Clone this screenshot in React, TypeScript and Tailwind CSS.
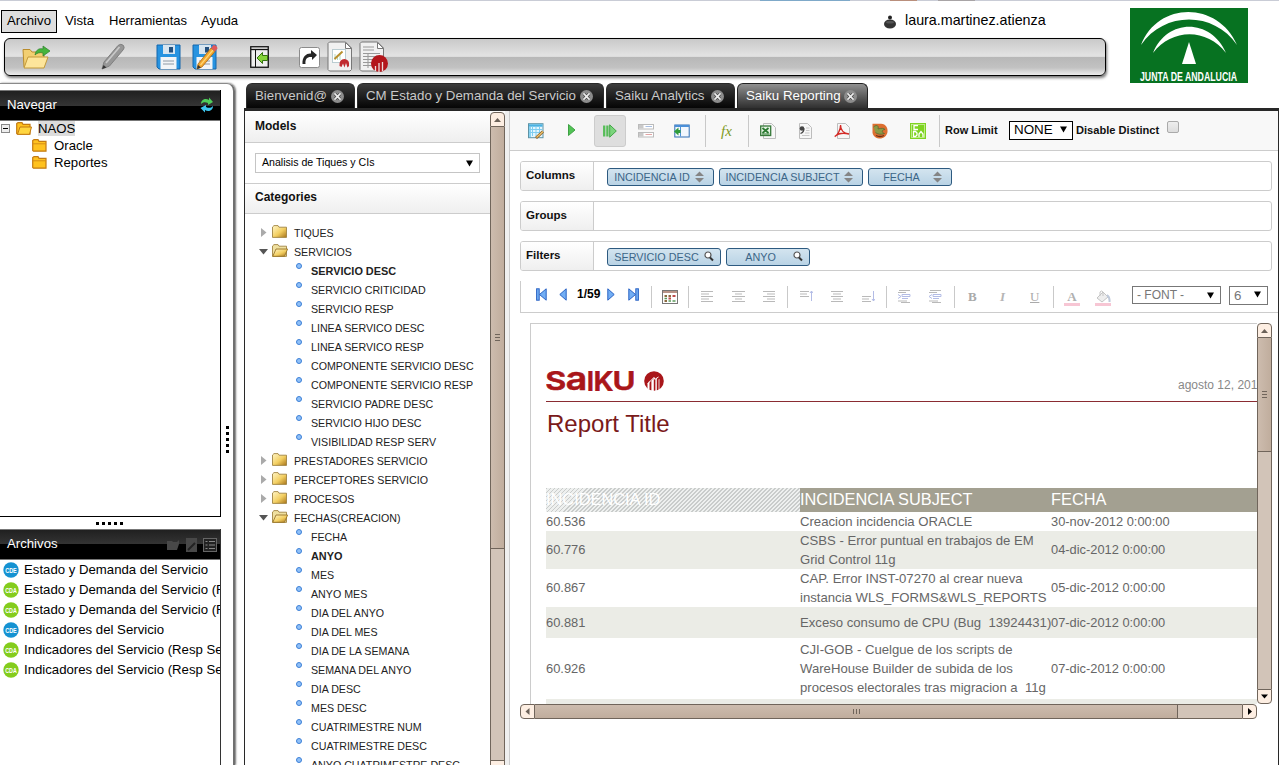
import React from "react";

type Kids = { children?: React.ReactNode };

/* ---------- logos ---------- */

function JuntaLogo() {
  return (
    <svg width="118" height="75" viewBox="0 0 118 75" className="block">
      <rect width="118" height="75" fill="#077221" />
      <path d="M11 37 C28 -7 88 -7 107 37 C84 3 34 3 11 37Z" fill="#fff" />
      <path d="M23 45 C37 10 81 10 96 45 C77 20 42 20 23 45Z" fill="#fff" />
      <path d="M59 34 L66 56 L52 56Z" fill="#fff" />
      <text x="10" y="73" fontSize="13" fontFamily="Liberation Sans, sans-serif" fontWeight="bold" fill="#fff" textLength="97" lengthAdjust="spacingAndGlyphs">
        JUNTA DE ANDALUCIA
      </text>
    </svg>
  );
}

function SaikuMark({ size }: { size: number }) {
  return (
    <svg width={size} height={size} viewBox="0 0 20 20" className="block">
      <circle cx="10" cy="10" r="9.8" fill="#a9161a" />
      <path d="M3.500 17.500 V13 L5.500 9.500 V19Z M7.400 20 V10 L9.800 6.800 V20Z M11.400 20 V8.400 L12.800 7 V20Z M14.600 20 V8.600 L15.400 8 V18Z" fill="#fff" />
      <path d="M3.500 13 L10 6.400 L10.800 8.400 L14.500 6" stroke="#fff" strokeWidth="1" fill="none" />
    </svg>
  );
}

function SaikuLogo() {
  return (
    <div className="flex h-5 items-center gap-[10px]">
      <svg
        width="88"
        height="20"
        viewBox="0 0 88 20"
        className="block"
        fontFamily="Inter, sans-serif"
        fontWeight="600"
        fill="#a9161a"
        stroke="#a9161a"
        strokeWidth=".6"
        strokeLinejoin="round"
      >
        <text x="-.8" y="19.300" fontSize="26" textLength="21" lengthAdjust="spacingAndGlyphs">S</text>
        <text x="19.800" y="19.300" fontSize="33" textLength="21.500" lengthAdjust="spacingAndGlyphs">a</text>
        <text x="40.800" y="19.600" fontSize="26.500">I</text>
        <text x="47.500" y="19.600" fontSize="26.500" textLength="20" lengthAdjust="spacingAndGlyphs">K</text>
        <text x="66.500" y="19.400" fontSize="26.500" textLength="23" lengthAdjust="spacingAndGlyphs">U</text>
      </svg>
      <SaikuMark size={20} />
    </div>
  );
}

/* ---------- main toolbar icons ---------- */

function OpenIcon() {
  return (
    <svg width="29" height="25" viewBox="0 0 29 25" className="block">
      <path d="M1 4.5 h7 l2 2.5 h12 v15 H2Z" fill="#f2cf72" stroke="#b98c2c" />
      <path d="M6 12 h20 l-4 11 H2Z" fill="#fde59b" stroke="#c39a3b" />
      <path d="M13 10 C14 4 18 3 21 4 V1 L28 6 L21 11 V8 C18 7 15 8 13 10Z" fill="#45b43c" stroke="#2d7f2b" strokeWidth=".7" />
    </svg>
  );
}

function PencilIcon() {
  return (
    <svg width="24" height="28" viewBox="0 0 24 28" className="block">
      <path d="M3 19 L17 2.5 Q20 0 22.5 2.5 Q24 5 22 7 L8.500 23 L1 26Z" fill="#979797" stroke="#808080" />
      <path d="M5 20 L18.500 4" stroke="#c9c9c9" strokeWidth="1.600" />
      <path d="M1 26 l1.600 -4 l2.800 2.400Z" fill="#333" />
    </svg>
  );
}

function SaveIcon({ edit }: { edit?: boolean }) {
  return (
    <svg width="26" height="26" viewBox="0 0 26 26" className="block">
      <path d="M1 1 H24 V25 H3 L1 23Z" fill="#2793e0" stroke="#1467ac" />
      <rect x="7" y="1" width="12" height="9" fill="#d7e5f0" />
      <rect x="13" y="3" width="4" height="5.500" fill="#23507e" />
      <rect x="4.500" y="13" width="16" height="12" fill="#f3f5f7" />
      <path d="M7 17 H18 M7 20 H18" stroke="#8e99a4" />
      {edit && (
        <g>
          <path d="M6 20 L19 4 L23 7.500 L10 23 L5 25Z" fill="#f3a72c" stroke="#a4681a" strokeWidth=".8" />
          <path d="M8.500 21 L21 6" stroke="#ffd777" strokeWidth="1.200" />
          <path d="M19 4 L21.500 1 Q25 1 25.500 4.500 L23 7.500Z" fill="#e05a5a" />
          <path d="M5 25 l1 -4 l3 2.600Z" fill="#333" />
        </g>
      )}
    </svg>
  );
}

function PanelIcon() {
  return (
    <svg width="19" height="22" viewBox="0 0 19 22" className="block">
      <rect x=".75" y=".75" width="17.500" height="20.500" fill="#eee" stroke="#111" strokeWidth="1.300" />
      <path d="M1 3.500 H18" stroke="#111" strokeWidth="1.300" />
      <path d="M5.500 4 V21" stroke="#111" />
      <path d="M7 12 L12.500 6.500 V9.500 H17.500 V14.500 H12.500 V17.500Z" fill="#85d339" stroke="#35720f" />
    </svg>
  );
}

function RedirectIcon() {
  return (
    <svg width="21" height="21" viewBox="0 0 21 21" className="block">
      <rect x=".5" y=".5" width="20" height="20" rx="2" fill="#fff" stroke="#8b8b8b" />
      <path d="M3.500 17 C3 9 8 6 12 6.500 V3 L18 8 L13 13 V10 C8 9.500 6 12 6.500 17Z" fill="#262626" />
    </svg>
  );
}

function SheetIcon({ report }: { report?: boolean }) {
  return (
    <svg width={report ? 30 : 25} height="31" viewBox={report ? "0 0 30 31" : "0 0 25 31"} className="block">
      <path d="M2.500 1 H18.500 L24.500 7 V28.500 L23 30 H2.500 L1 28.500 V2.500Z" fill="#f1f1f1" stroke="#777" />
      <path d="M18.500 1.500 V7.500 H24.500Z" fill="#fff" stroke="#777" />
      {report ? (
        <g>
          <path d="M4 6 H15 M4 9 H15 M4 12.500 H21 M4 15.500 H21 M4 18.500 H21 M4 21.500 H21 M4 24.500 H18 M9 12 V27" stroke="#999" />
          <circle cx="20.500" cy="22.500" r="8.500" fill="#b3161b" />
          <path d="M16.500 30 V25 M20 31 V22 M23.500 30 V21" stroke="#ecdcdc" strokeWidth="1.300" />
        </g>
      ) : (
        <g>
          <rect x="5.500" y="8.500" width="13" height="13" fill="#fff" stroke="#7fa3ad" strokeDasharray="1 1" />
          <path d="M8 19 V13 M10.500 19 V16 M13 19 V12" stroke="#b4d7c0" />
          <path d="M7.500 18 L15.500 10.500" stroke="#b98f2e" strokeWidth="2" />
          <path d="M12.500 25 Q12 18 17.500 18 Q23 18.500 22 25 L20.500 26.500 L19 22 L17.500 26.500 L16 22.500 L14.500 26Z" fill="#c02a2e" />
        </g>
      )}
    </svg>
  );
}

/* ---------- small shared glyphs ---------- */

function RefreshIcon() {
  return (
    <svg width="14" height="16" viewBox="0 0 14 16" className="block">
      <path d="M1 7 C1 2 6 1 9 3 V0.500 L13 5 L8 8 V6 C5 4.500 3 5 1 7Z" fill="#4fcf5a" />
      <path d="M13 9 C13 14 8 15 5 13 V15.500 L0.500 11 L6 8 V10 C9 11.500 11 11 13 9Z" fill="#3cc5ee" />
    </svg>
  );
}

function NavFolder({ open }: { open?: boolean }) {
  return (
    <svg width="16" height="13" viewBox="0 0 16 13" className="block">
      <path d="M.7 11.500 V1.500 L2 .7 H6 L7 2.300 H14 V12.200 H1.500Z" fill="#ffc21f" stroke="#c47b13" strokeWidth="1.200" />
      {open ? (
        <path d="M4 5 H15.500 L13.500 12.300 H1.500Z" fill="#ffd640" stroke="#c47b13" />
      ) : (
        <path d="M1 4.800 H14" stroke="#d58c17" />
      )}
    </svg>
  );
}

function TreeFolder({ open }: { open?: boolean }) {
  return (
    <svg width="16" height="13" viewBox="0 0 16 13" className="block">
      <defs>
        <linearGradient id="gold" x1="0" y1="0" x2="1" y2="1">
          <stop offset="0" stopColor="#fff6c8" />
          <stop offset=".55" stopColor="#f3cf62" />
          <stop offset="1" stopColor="#a8741a" />
        </linearGradient>
      </defs>
      <path d="M.5 12 V2 L2 .6 H6 L7 2.200 H14.500 V12.400 H.5Z" fill={open ? "#efe0a0" : "url(#gold)"} stroke="#a08444" strokeWidth=".9" />
      {open && <path d="M4 5 H15.600 L12.500 12.300 H.8Z" fill="url(#gold)" stroke="#98752a" strokeWidth=".9" />}
    </svg>
  );
}

function CloseIcon() {
  return (
    <svg width="13" height="13" viewBox="0 0 12 12" className="block">
      <circle cx="6" cy="6" r="6" fill="#8c8c8c" />
      <path d="M3.500 3.500 L8.500 8.500 M8.500 3.500 L3.500 8.500" stroke="#3c3c3c" strokeWidth="2.800" />
      <path d="M3.200 3.200 L8.800 8.800 M8.800 3.200 L3.200 8.800" stroke="#ececec" strokeWidth="1.600" />
    </svg>
  );
}

function Caret() {
  return (
    <svg width="7" height="7" viewBox="0 0 7 7" className="block shrink-0">
      <path d="M0 .5 H7 L3.500 6.500Z" fill="#000" />
    </svg>
  );
}

function Dot() {
  return (
    <svg width="6" height="6" viewBox="0 0 6 6" className="block">
      <circle cx="3" cy="3" r="2.500" fill="#8fc0f8" stroke="#3c7fd6" />
    </svg>
  );
}

/* ---------- report designer toolbar icons ---------- */

function G16({ children }: Kids) {
  return (
    <svg width="16" height="16" viewBox="0 0 16 16" className="block">
      {children}
    </svg>
  );
}

const page = <path d="M3.500 .5 H11.500 L15.500 4.500 V15.500 H3.500Z" fill="#f7f7f7" stroke="#bdbdbd" />;

const tableEdit = (
  <G16>
    <rect x=".5" y=".7" width="14.500" height="14" fill="#e4f6fd" stroke="#5d93a6" />
    <path d="M1 2.500 H14.500" stroke="#4ab2e2" strokeWidth="2.400" />
    <path d="M2 4 V14" stroke="#8ad4f3" strokeWidth="2" />
    <path d="M1 6.500 H14 M1 9.500 H14 M4.500 3 V13 M8 3 V13 M11.500 3 V13" stroke="#7fcdf0" />
    <path d="M8 15 L15 8.500" stroke="#8a5a24" strokeWidth="2.800" />
    <path d="M8.500 14.500 L15 8.500" stroke="#f0c76d" strokeWidth="1.300" />
  </G16>
);
const play = (
  <svg width="8" height="12" viewBox="0 0 8 12" className="block">
    <path d="M.5 .5 L7 6 L.5 11.500Z" fill="#52c455" stroke="#3fa044" />
  </svg>
);
const autoRun = (
  <svg width="14" height="14" viewBox="0 0 14 14" className="block">
    <path d="M1.200 1.500 V12.500 M4.400 1.500 V12.500" stroke="#56bd58" strokeWidth="2.300" />
    <path d="M6.700 .8 L13.300 7 L6.700 13.200Z" fill="#7bd47c" stroke="#45a749" />
  </svg>
);
const fieldRows = (
  <G16>
    <rect x=".5" y="1.500" width="15" height="4.500" fill="#fff" stroke="#bbb" />
    <rect x=".5" y="9.500" width="15" height="4.500" fill="#fff" stroke="#bbb" />
    <path d="M1 3.750 H5.500 M1 11.750 H5.500" stroke="#c9c9c9" strokeWidth="3.500" />
    <path d="M7.500 3.500 H14" stroke="#a9bfe2" />
    <path d="M7.500 11.500 H14" stroke="#e3a5a5" />
  </G16>
);
const sidePane = (
  <G16>
    <rect x=".8" y="2" width="14.400" height="12" fill="#f2f7fd" stroke="#2f6fb5" />
    <path d="M1 3 H15" stroke="#4b8fd8" strokeWidth="2" />
    <path d="M6.500 4 V13.500" stroke="#4b8fd8" />
    <path d="M0 8.500 L4.500 4.500 V7 H6.500 V10 H4.500 V12.500Z" fill="#2f9c3c" />
  </G16>
);
const xls = (
  <G16>
    {page}
    <rect x=".7" y="3" width="10" height="9.500" fill="#e6f3e4" stroke="#37783a" strokeWidth="1.300" />
    <path d="M2.500 5 L8.500 10 M8.500 5 L2.500 10" stroke="#2b7a31" strokeWidth="1.800" />
    <path d="M2 11 H9.500" stroke="#2b7a31" />
  </G16>
);
const csv = (
  <G16>
    {page}
    <path d="M10 5 H13.500 M10 7.500 H13.500 M9 10 H13.500 M6 12.500 H13.500" stroke="#c9c9c9" />
    <circle cx="6" cy="5.500" r="2.300" fill="#444" />
    <path d="M8 5.500 C8 8 7 9.500 4.500 10.500" fill="none" stroke="#444" strokeWidth="1.300" />
  </G16>
);
const pdf = (
  <G16>
    {page}
    <path d="M0.800 13.500 C3 12.500 7 7 6.500 2 C6.500 7 10 10.500 15 11 C9 9.500 4 10.500 .8 13.500Z" fill="none" stroke="#d32a26" strokeWidth="1.400" />
  </G16>
);
const brush = (
  <G16>
    <path d="M.5 .8 H9 C14 1 16 5 15.500 9 C15 13 11 16 7 15.500 C3 15 0 12 .5 8Z" fill="#dd6f30" />
    <path d="M1.500 4 C5 1 7 3 6 6 C9 5 12 5 13 6.500 C10 6.500 9 9.500 12.500 10.500 C9 12 5 11 3.500 9.500" fill="#8d9a45" stroke="#5c6b33" strokeWidth=".8" />
    <path d="M4 12.500 C7 14 10 13.500 12 12.500" stroke="#6b2f18" strokeWidth="1.300" fill="none" />
  </G16>
);
const cda = (
  <G16>
    <rect width="16" height="16" fill="#7ed321" />
    <rect x="1.500" y="1.500" width="13" height="13" fill="none" stroke="#d8f5b4" strokeWidth=".7" />
    <path d="M8 2.700 H4 V6.500 H8 M3.500 8.500 H5.500 L7 10 V12 L5.500 13.500 H3.500Z M9 14 V11 L11 8.500 L13 11 V14" fill="none" stroke="#fff" strokeWidth="1.300" />
  </G16>
);

/* ---------- pager and format icons ---------- */

function PageArrow({ dir, bar }: { dir: "l" | "r"; bar?: boolean }) {
  const w = bar ? 11 : 8;
  return (
    <svg width={w} height="13" viewBox={`0 0 ${w} 13`} className={dir === "l" ? "block shrink-0" : "block shrink-0 -scale-x-100"}>
      <path d={bar ? "M10.200 .8 L3.500 6.500 L10.200 12.200Z" : "M7.200 .8 L.8 6.500 L7.200 12.200Z"} fill="#72aef4" stroke="#2a63c4" />
      {bar && <rect x=".6" y=".8" width="2.600" height="11.400" fill="#72aef4" stroke="#2a63c4" />}
    </svg>
  );
}

function Lines({ d, blue, className }: { d: string; blue?: string; className: string }) {
  return (
    <svg width="13" height="13" viewBox="0 0 13 13" className={className}>
      <path d={d} stroke="#b9b9b9" fill="none" />
      {blue && <path d={blue} stroke="#b3bce6" fill="none" />}
    </svg>
  );
}

function Sep({ className }: { className: string }) {
  return <span className={`w-px shrink-0 bg-[#c9c9c9] ${className}`} />;
}

/* ---------- pieces ---------- */

function Tab({ label, active, className }: { label: string; active?: boolean; className: string }) {
  return (
    <div
      className={`flex h-[25px] items-center justify-between rounded-t-[6px] border border-b-0 pl-2 pr-[10px] text-[13.3px] ${
        active
          ? "border-[#222] bg-linear-to-b from-[#919191] to-[#303030] text-white"
          : "border-[#2a2a2a] bg-linear-to-b from-[#3d3d3d] to-[#060606] text-[#c9c9c9]"
      } ${className}`}
    >
      <span className="whitespace-nowrap">{label}</span>
      <CloseIcon />
    </div>
  );
}

function PanelHeader({ title, children }: { title: string } & Kids) {
  return (
    <div className="flex h-[31px] shrink-0 items-center justify-between border-y border-[#777] bg-[linear-gradient(#202020,#343434_50%,#000_50%)] pl-[7px] text-[13.2px] text-white">
      <span className="pb-[2px]">{title}</span>
      {children}
    </div>
  );
}

type Node = { t: string; kind: "closed" | "open" | "leaf"; bold?: boolean };
const leaf = (t: string, bold?: boolean): Node => ({ t, kind: "leaf", bold });
const tree: Node[] = [
  { t: "TIQUES", kind: "closed" },
  { t: "SERVICIOS", kind: "open" },
  leaf("SERVICIO DESC", true),
  leaf("SERVICIO CRITICIDAD"),
  leaf("SERVICIO RESP"),
  leaf("LINEA SERVICO DESC"),
  leaf("LINEA SERVICO RESP"),
  leaf("COMPONENTE SERVICIO DESC"),
  leaf("COMPONENTE SERVICIO RESP"),
  leaf("SERVICIO PADRE DESC"),
  leaf("SERVICIO HIJO DESC"),
  leaf("VISIBILIDAD RESP SERV"),
  { t: "PRESTADORES SERVICIO", kind: "closed" },
  { t: "PERCEPTORES SERVICIO", kind: "closed" },
  { t: "PROCESOS", kind: "closed" },
  { t: "FECHAS(CREACION)", kind: "open" },
  leaf("FECHA"),
  leaf("ANYO", true),
  leaf("MES"),
  leaf("ANYO MES"),
  leaf("DIA DEL ANYO"),
  leaf("DIA DEL MES"),
  leaf("DIA DE LA SEMANA"),
  leaf("SEMANA DEL ANYO"),
  leaf("DIA DESC"),
  leaf("MES DESC"),
  leaf("CUATRIMESTRE NUM"),
  leaf("CUATRIMESTRE DESC"),
  leaf("ANYO CUATRIMESTRE DESC"),
];

function TreeRow({ n }: { n: Node }) {
  if (n.kind === "leaf") {
    return (
      <div className="flex h-[19px] shrink-0 items-center gap-[9px] whitespace-nowrap pl-[51px]">
        <span className="pb-[11px]">
          <Dot />
        </span>
        <span className={n.bold ? "text-[10.9px] font-bold" : "pb-[2px]"}>{n.t}</span>
      </div>
    );
  }
  return (
    <div className="flex h-[19px] shrink-0 items-center whitespace-nowrap pl-[14px]">
      <svg width="9" height="9" viewBox="0 0 9 9" className="-mt-[2px] block">
        {n.kind === "open" ? <path d="M0 2 H9 L4.500 7.500Z" fill="#555" /> : <path d="M2 0 L7.500 4.500 L2 9Z" fill="#aaa" />}
      </svg>
      <span className="ml-1 mr-[6px] pb-[4px]">
        <TreeFolder open={n.kind === "open"} />
      </span>
      <span className="pb-[2px]">{n.t}</span>
    </div>
  );
}

function Chip({ label, icon, className }: { label: string; icon: "sort" | "find"; className: string }) {
  return (
    <div className={`flex h-[18px] items-center rounded-[3px] border border-[#2d5a80] bg-linear-to-b from-[#d3e4ef] to-[#b9d3e5] pl-[4px] text-[10.8px] text-[#3b6587] ${className}`}>
      <span className="flex-1 whitespace-nowrap text-center">{label}</span>
      {icon === "sort" ? (
        <svg width="9" height="12" viewBox="0 0 10 12" className="ml-[3px] mr-[9px] block shrink-0">
          <path d="M5 0 L10 5 H0Z M5 12 L10 7 H0Z" fill="#858585" />
        </svg>
      ) : (
        <svg width="10" height="11" viewBox="0 0 10 11" className="mb-px ml-[3px] mr-[6px] block shrink-0">
          <circle cx="4" cy="4" r="3" fill="#fff" stroke="#555" strokeWidth="1.200" />
          <path d="M6 6.500 L9 9.500" stroke="#333" strokeWidth="2" />
        </svg>
      )}
    </div>
  );
}

function DropRow({ label, children }: { label: string } & Kids) {
  return (
    <div className="flex h-[30px] overflow-hidden rounded-[3px] border border-[#ccc] bg-white">
      <div className="w-[73px] border-r border-[#ccc] bg-linear-to-b from-white to-[#efefef] pl-[5px] pt-[5px] text-[11.5px] font-bold leading-[16px] text-[#111]">{label}</div>
      <div className="flex flex-1 items-start gap-[5px] pl-[13px] pt-[6px]">{children}</div>
    </div>
  );
}

function ScrollCap({ dir, className }: { dir: "up" | "down" | "left" | "right"; className: string }) {
  const d = {
    up: "M0 6 L3.500 2 L7 6Z",
    down: "M0 1.500 L3.500 5.500 L7 1.500Z",
    left: "M5.500 0 V7 L1.500 3.500Z",
    right: "M2 0 V7 L6 3.500Z",
  }[dir];
  return (
    <div className={`flex shrink-0 items-center justify-center border-[#70655b] bg-[#fdeee2] ${className}`}>
      <svg width="7" height="7" viewBox="0 0 7 7" className="block">
        <path d={d} fill={dir === "up" || dir === "left" ? "#6b6158" : "#000"} />
      </svg>
    </div>
  );
}

const files = [
  ["E", "Estado y Demanda del Servicio"],
  ["A", "Estado y Demanda del Servicio (Resp)"],
  ["A", "Estado y Demanda del Servicio (Resp)"],
  ["E", "Indicadores del Servicio"],
  ["A", "Indicadores del Servicio (Resp Serv)"],
  ["A", "Indicadores del Servicio (Resp Serv)"],
];

const rows: { id: string; s: string[]; f: string; h: string; alt?: boolean }[] = [
  { id: "60.536", s: ["Creacion incidencia ORACLE"], f: "30-nov-2012 0:00:00", h: "h-[19px]" },
  { id: "60.776", s: ["CSBS - Error puntual en trabajos de EM", "Grid Control 11g"], f: "04-dic-2012 0:00:00", h: "h-[38px]", alt: true },
  { id: "60.867", s: ["CAP. Error INST-07270 al crear nueva", "instancia WLS_FORMS&WLS_REPORTS"], f: "05-dic-2012 0:00:00", h: "h-[38px]" },
  { id: "60.881", s: ["Exceso consumo de CPU (Bug  13924431)"], f: "07-dic-2012 0:00:00", h: "h-[31px]", alt: true },
  { id: "60.926", s: ["CJI-GOB - Cuelgue de los scripts de", "WareHouse Builder de subida de los", "procesos electorales tras migracion a  11g"], f: "07-dic-2012 0:00:00", h: "h-[61px]" },
];

/* ---------- sections ---------- */

function Header() {
  return (
    <header className="flex h-[82px] shrink-0">
      <div className="w-[1110px] pl-1 pt-[9px]">
        <div className="-ml-[3px] flex h-[23px] items-center text-[13.2px]">
          <span className="flex h-[23px] w-[56px] items-center border border-black bg-[#dedede] pb-[2px] pl-[5px]">Archivo</span>
          <span className="ml-2 w-[44px] pb-[2px]">Vista</span>
          <span className="w-[92px] pb-[2px] text-[13px]">Herramientas</span>
          <span className="w-[683px] pb-[2px]">Ayuda</span>
          <svg width="12" height="14" viewBox="0 0 12 14" className="block">
            <circle cx="6" cy="2.500" r="2" fill="#222" />
            <ellipse cx="6" cy="9" rx="6" ry="4.600" fill="#333" />
            <ellipse cx="6" cy="7.300" rx="4" ry="1.200" fill="#555" />
          </svg>
          <span className="ml-[9px] pb-[2px] text-[14.3px]">laura.martinez.atienza</span>
        </div>
        <div className="mt-[5px] flex h-[38px] w-[1102px] items-center rounded-[6px] border border-black bg-[linear-gradient(#c9c9c9,#e2e2e2_45%,#dcdcdc_49%,#b7b7b7_50%,#c2c2c2_80%,#ececec)] pl-[17px] shadow-[1px_2px_3px_#777]">
          <OpenIcon />
          <span className="ml-[50px]"><PencilIcon /></span>
          <span className="ml-[31px]"><SaveIcon /></span>
          <span className="ml-[10px]"><SaveIcon edit /></span>
          <span className="ml-[32px]"><PanelIcon /></span>
          <span className="ml-[30px]"><RedirectIcon /></span>
          <span className="ml-[7px] pb-[2px]"><SheetIcon /></span>
          <span className="ml-[7px] pb-[2px]"><SheetIcon report /></span>
        </div>
      </div>
      <div className="pl-5 pt-[7px]">
        <JuntaLogo />
      </div>
    </header>
  );
}

function Browser() {
  return (
    <aside className="flex w-[236px] shrink-0">
      <div className="flex w-[235px] rounded-tr-[8px] border-r-[2px] border-t border-[#8a8a8a] border-r-[#707070] pt-[6px] shadow-[1px_0_2px_#777]">
        <div className="flex w-[221px] flex-col">
          <div className="flex h-[427px] flex-col border-b border-r border-black">
            <PanelHeader title="Navegar">
              <span className="mr-[6px] pb-px"><RefreshIcon /></span>
            </PanelHeader>
            <div className="-mt-px flex h-[17px] items-center text-[13.2px]">
              <span className="ml-px flex size-[9px] items-center justify-center border border-[#888] bg-[#eee]">
                <span className="h-px w-[5px] bg-black" />
              </span>
              <span className="ml-[6px] mr-[6px]"><NavFolder open /></span>
              <span className="bg-[#dcdcdc] leading-[15px]">NAOS</span>
            </div>
            {["Oracle", "Reportes"].map((t) => (
              <div key={t} className="flex h-[17px] items-center gap-[6px] pl-[32px] text-[13.2px]">
                <NavFolder />
                <span>{t}</span>
              </div>
            ))}
          </div>
          <div className="flex h-3 items-center gap-[3px] pl-[96px]">
            {[0, 1, 2, 3, 4].map((i) => (
              <span key={i} className="size-[3px] bg-black" />
            ))}
          </div>
          <div className="flex flex-1 flex-col overflow-hidden border-r border-[#333]">
            <PanelHeader title="Archivos">
              <span className="flex items-center gap-[6px] pr-[3px]">
                <svg width="13" height="11" viewBox="0 0 13 11"><path d="M0 2 H5 L6 3 H10 L12 1 V5 L10 11 H0Z" fill="#484848" /></svg>
                <svg width="11" height="14" viewBox="0 0 11 14"><path d="M0 0 H11 V14 H0Z" fill="#484848" /><path d="M2 12 L9 5" stroke="#222" strokeWidth="2" /></svg>
                <svg width="14" height="14" viewBox="0 0 14 14"><rect x=".5" y=".5" width="13" height="13" fill="#222" stroke="#666" /><path d="M2.500 3.500 H4.500 M6 3.500 H12 M2.500 7 H4.500 M6 7 H12 M2.500 10.500 H4.500 M6 10.500 H12" stroke="#888" /></svg>
              </span>
            </PanelHeader>
            {files.map(([k, t], i) => (
              <div key={i} className="flex h-5 shrink-0 items-center whitespace-nowrap pl-[3px] text-[13.2px]">
                <svg width="16" height="16" viewBox="0 0 16 16" className="mr-[5px] block shrink-0">
                  <circle cx="8" cy="8" r="7.700" fill={k === "E" ? "#1592d2" : "#84cc1c"} />
                  <text x="2.200" y="10.500" fontSize="6.500" fontWeight="bold" fontFamily="Liberation Sans, sans-serif" fill="#fff" textLength="11.600" lengthAdjust="spacingAndGlyphs">
                    {k === "E" ? "CDE" : "CDA"}
                  </text>
                </svg>
                <span>{t}</span>
              </div>
            ))}
          </div>
        </div>
        <div className="flex flex-col gap-[3px] pl-[5px] pt-[336px]">
          {[0, 1, 2, 3, 4].map((i) => (
            <span key={i} className="size-[3px] bg-black" />
          ))}
        </div>
      </div>
    </aside>
  );
}

function Categories() {
  return (
    <div className="flex w-[245px] shrink-0 flex-col overflow-hidden text-[#222]">
      <div className="h-[32px] shrink-0 border-b border-[#ccc] bg-linear-to-b from-white to-[#efefef] pl-[10px] pt-[7px] text-[12px] font-bold leading-[16px] text-[#111]">Models</div>
      <div className="flex h-[41px] shrink-0 items-center border-b border-[#ccc] pl-[10px]">
        <div className="flex h-5 w-[225px] items-center justify-between border border-[#c5c5c5] bg-white pl-[6px] pr-[6px] text-[10.6px] text-black">
          <span>Analisis de Tiques y CIs</span>
          <Caret />
        </div>
      </div>
      <div className="h-[30px] shrink-0 border-b border-[#ccc] bg-linear-to-b from-white to-[#efefef] pl-[10px] pt-[5px] text-[12px] font-bold leading-[16px] text-[#111]">Categories</div>
      <div className="flex flex-col pt-[10px] text-[10.67px]">
        {tree.map((n) => (
          <TreeRow key={n.t} n={n} />
        ))}
      </div>
    </div>
  );
}

function SideScroll() {
  return (
    <div className="flex w-[15px] shrink-0 flex-col pt-px">
      <ScrollCap dir="up" className="h-[15px] rounded-t-[4px] border" />
      <div className="flex flex-1 flex-col border-x border-[#70655b] bg-[#d2c4b8]">
        <div className="flex h-[422px] flex-col items-center justify-center gap-[2px] border-b border-[#70655b] bg-linear-to-r from-[#cdbcae] to-[#c0ad9d]">
          <span className="h-px w-[5px] bg-[#70655b]" />
          <span className="h-px w-[5px] bg-[#70655b]" />
          <span className="h-px w-[5px] bg-[#70655b]" />
        </div>
      </div>
      <div className="h-[5px] border border-b-0 border-[#70655b] bg-[#fdeee2]" />
    </div>
  );
}

function ActionBar() {
  return (
    <div className="flex h-10 shrink-0 items-center border-b border-[#ccc] bg-[#f8f8f8] text-[11px] font-bold text-[#111]">
      <span className="ml-[18px]">{tableEdit}</span>
      <span className="ml-6 pb-px">{play}</span>
      <span className="ml-[18px] flex size-8 items-center justify-center rounded-[3px] border border-[#ccc] bg-[#dedede]">{autoRun}</span>
      <span className="ml-3">{fieldRows}</span>
      <span className="ml-5">{sidePane}</span>
      <Sep className="ml-[15px] h-8" />
      <span className="ml-[15px] w-[14px] font-['Liberation_Serif',serif] text-[15px] font-normal italic leading-4 text-[#7f9a22]">fx</span>
      <Sep className="ml-[13px] h-8" />
      <span className="ml-[11px]">{xls}</span>
      <span className="ml-5">{csv}</span>
      <span className="ml-[22px]">{pdf}</span>
      <span className="ml-[22px]">{brush}</span>
      <span className="ml-[22px]">{cda}</span>
      <Sep className="ml-[13px] h-8" />
      <span className="ml-[5px] w-16 whitespace-nowrap">Row Limit</span>
      <div className="-mt-px flex h-[19px] w-16 items-center justify-between border border-black bg-white pl-1 pr-[5px] text-[13.4px] font-normal text-black">
        <span>NONE</span>
        <span className="pb-[2px]"><Caret /></span>
      </div>
      <span className="ml-[3px] w-[91px] whitespace-nowrap text-[11.1px]">Disable Distinct</span>
      <span className="mb-[7px] size-3 rounded-[2px] border border-[#aaa] bg-linear-to-b from-[#eee] to-[#ddd]" />
    </div>
  );
}

function FormatBar() {
  return (
    <div className="ml-[10px] mt-[10px] flex h-8 shrink-0 items-center border-b border-l border-[#ccc]">
      <span className="mb-[5px] ml-[15px] flex items-center">
        <PageArrow dir="l" bar />
        <span className="ml-[12px]"><PageArrow dir="l" /></span>
        <span className="ml-[10px] w-[24px] whitespace-nowrap text-[12px] font-bold">1/59</span>
        <span className="ml-[6px]"><PageArrow dir="r" /></span>
        <span className="ml-[13px]"><PageArrow dir="r" bar /></span>
      </span>
      <Sep className="ml-3 h-[22px]" />
      <svg width="16" height="14" viewBox="0 0 16 14" className="ml-[10px] block shrink-0">
        <rect x=".5" y=".5" width="15" height="13" fill="#fff" stroke="#777" />
        <path d="M1 2 H15" stroke="#b99589" strokeWidth="2" />
        <path d="M2.500 6 H5 M6.500 6 H9 M2.500 11 H5" stroke="#8b6a3f" strokeWidth="2" />
        <path d="M10.500 6 H13.500 M6.500 8.500 H9 " stroke="#bd4c4c" strokeWidth="2" />
        <path d="M2.500 8.500 H5 M10.500 11 H13.500 M6.500 11 H9" stroke="#5b9a5b" strokeWidth="1.500" />
      </svg>
      <Sep className="ml-[10px] h-[22px]" />
      <Lines className="ml-3 block shrink-0" d="M0 1.500 H12 M0 4 H8 M0 6.500 H12 M0 9 H8 M0 11.500 H12" />
      <Lines className="ml-[18px] block shrink-0" d="M0 1.500 H13 M3 4 H10 M0 6.500 H13 M3 9 H10 M0 11.500 H13" />
      <Lines className="ml-[18px] block shrink-0" d="M0 1.500 H12 M4 4 H12 M0 6.500 H12 M4 9 H12 M0 11.500 H12" />
      <Sep className="ml-[11px] h-[22px]" />
      <Lines className="ml-3 block shrink-0" d="M0 1.500 H9 M0 4 H7 M0 6.500 H9" blue="M11.500 11 V1 M10 3 L11.500 1 L13 3" />
      <Lines className="ml-[18px] block shrink-0" d="M0 1.500 H12 M2 4 H10 M0 6.500 H12 M2 9 H10 M0 11.500 H12" />
      <Lines className="ml-[18px] block shrink-0" d="M0 6.500 H9 M0 9 H7 M0 11.500 H9" blue="M11.500 1 V11 M10 9 L11.500 11 L13 9" />
      <Sep className="ml-[11px] h-[22px]" />
      <Lines className="ml-[11px] block shrink-0" d="M1 .5 H12 M3 12.500 H12 M0 2.500 H8 M0 11 H9" blue="M0 4.500 L3 6.500 L0 8.500 M4 4.500 H12 V6.500 H4Z M4 8.500 H10" />
      <Lines className="ml-[18px] block shrink-0" d="M1 .5 H12 M3 12.500 H12 M0 2.500 H8 M0 11 H9" blue="M3 4.500 L0 6.500 L3 8.500 M4 4.500 H12 V6.500 H4Z M4 8.500 H10" />
      <Sep className="ml-3 h-[22px]" />
      <span className="ml-[13px] w-[10px] font-['Liberation_Serif',serif] text-[13px] font-bold text-[#aaa]">B</span>
      <span className="ml-[22px] w-2 font-['Liberation_Serif',serif] text-[13px] font-bold italic text-[#b5b5b5]">I</span>
      <span className="ml-[22px] w-[10px] font-['Liberation_Serif',serif] text-[13px] text-[#aaa] underline">U</span>
      <Sep className="ml-[13px] h-[22px]" />
      <span className="ml-[10px] mt-[2px] flex h-4 w-4 justify-center border-b-[3px] border-[#f7c6d4] font-['Liberation_Serif',serif] text-[13px] font-bold leading-[13px] text-[#b0b0b0]">A</span>
      <svg width="16" height="16" viewBox="0 0 16 16" className="ml-[15px] mt-[2px] block shrink-0">
        <path d="M2 8 L8 2 L13 7 L7 12Z" fill="#eee" stroke="#c4c4c4" />
        <path d="M5 6 V2 Q6.500 0 8 2 V6" fill="none" stroke="#c4c4c4" />
        <path d="M12 5 Q15 7 14.500 12" fill="none" stroke="#bfc9da" strokeWidth="2" />
        <path d="M0 14.500 H16" stroke="#f7c6d4" strokeWidth="3" />
      </svg>
      <div className="mb-[3px] ml-[21px] flex h-[18px] w-[89px] items-center justify-between border border-[#777] bg-white pl-1 pr-[6px] text-[12px] text-[#777]">
        <span>- FONT -</span>
        <Caret />
      </div>
      <div className="mb-[2px] ml-2 flex h-[19px] w-[39px] items-center justify-between border border-[#777] bg-white pl-1 pr-[6px] text-[13.33px] text-[#777]">
        <span>6</span>
        <span className="pb-[2px]"><Caret /></span>
      </div>
    </div>
  );
}

function Report() {
  return (
    <div className="ml-[10px] mt-[10px] flex h-[396px] w-[752px] shrink-0">
      <div className="flex w-[737px] flex-col">
        <div className="ml-[10px] flex h-[381px] flex-col overflow-hidden border-l border-t border-[#ccc] pl-[15px] text-[13.15px] text-[#666]">
          <div className="flex h-[78px] w-[730px] shrink-0 items-end border-b border-b-[#8a2c32] pb-[10px]">
            <SaikuLogo />
            <span className="-mb-[3px] ml-[514px] whitespace-nowrap text-[12px] leading-[18px] text-[#888]">agosto 12, 2013</span>
          </div>
          <div className="h-[86px] shrink-0 pl-px pt-[8px] text-[24px] leading-[28px] text-[#7a1a1a]">Report Title</div>
          <div className="flex h-6 shrink-0 items-center text-[16.35px] text-white">
            <span className="flex h-6 w-[254px] items-center bg-[repeating-linear-gradient(135deg,#c9cccb_0_1.4px,#eef0ef_1.4px_2.83px)] pb-[2px]">INCIDENCIA ID</span>
            <span className="flex h-6 w-[251px] items-center bg-[#a3a091] pb-[2px]">INCIDENCIA SUBJECT</span>
            <span className="flex h-6 flex-1 items-center bg-[#a3a091] pb-[2px]">FECHA</span>
          </div>
          {rows.map((r) => (
            <div key={r.id} className={`flex shrink-0 items-center ${r.h} ${r.alt ? "bg-[#ebece6]" : ""}`}>
              <span className="w-[254px] shrink-0 text-[12.9px]">{r.id}</span>
              <span className="flex w-[251px] shrink-0 flex-col whitespace-pre leading-[19px]">
                {r.s.map((l) => (
                  <span key={l}>{l}</span>
                ))}
              </span>
              <span className="whitespace-nowrap text-[12.85px]">{r.f}</span>
            </div>
          ))}
          <div className="h-5 shrink-0 bg-[#ebece6]" />
        </div>
        <div className="flex h-[15px]">
          <ScrollCap dir="left" className="w-[15px] rounded-l-[4px] border" />
          <div className="flex flex-1 border-y border-[#70655b] bg-[#d2c4b8]">
            <div className="flex w-[643px] items-center justify-center gap-[2px] border-r border-[#70655b] bg-linear-to-b from-[#cdbcae] to-[#c0ad9d]">
              <span className="h-[5px] w-px bg-[#70655b]" />
              <span className="h-[5px] w-px bg-[#70655b]" />
              <span className="h-[5px] w-px bg-[#70655b]" />
            </div>
          </div>
          <ScrollCap dir="right" className="w-[15px] rounded-r-[4px] border" />
        </div>
      </div>
      <div className="flex h-[381px] w-[15px] flex-col">
        <ScrollCap dir="up" className="h-[15px] rounded-t-[4px] border" />
        <div className="flex flex-1 flex-col border-x border-[#70655b] bg-[#d2c4b8]">
          <div className="flex h-[114px] flex-col items-center justify-center gap-[2px] border-b border-[#70655b] bg-linear-to-r from-[#cdbcae] to-[#c0ad9d]">
            <span className="h-px w-[5px] bg-[#70655b]" />
            <span className="h-px w-[5px] bg-[#70655b]" />
            <span className="h-px w-[5px] bg-[#70655b]" />
          </div>
        </div>
        <ScrollCap dir="down" className="h-[15px] rounded-b-[4px] border" />
      </div>
    </div>
  );
}

export default function App() {
  return (
    <div className="flex h-[765px] w-[1279px] flex-col overflow-hidden bg-white font-['Liberation_Sans',Arial,sans-serif] text-black">
      <div className="h-px shrink-0 bg-[linear-gradient(90deg,#c9ccd6_760px,#7fa9c9_760px_850px,#c9ccd6_850px_890px,#b98f7c_890px_917px,#c9ccd6_917px_938px,#a8a4a6_938px_975px,#c9ccd6_975px)]" />
      <Header />
      <div className="flex min-h-0 flex-1">
        <Browser />
        <main className="ml-2 flex min-w-0 flex-1 flex-col">
          <nav className="flex gap-[2px] pl-[2px]">
            <Tab label="Bienvenid@" className="w-[109px]" />
            <Tab label="CM Estado y Demanda del Servicio" className="w-[247px]" />
            <Tab label="Saiku Analytics" className="w-[129px]" />
            <Tab label="Saiku Reporting" active className="w-[131px]" />
          </nav>
          <div className="flex min-h-0 flex-1 border-x border-t-[3px] border-[#282828]">
            <Categories />
            <SideScroll />
            <div className="w-[5px] shrink-0 border-r border-[#ccc] bg-[#efefef]" />
            <section className="flex min-w-0 flex-1 flex-col">
              <ActionBar />
              <div className="flex flex-col gap-[10px] pl-[10px] pr-[6px] pt-[10px]">
                <DropRow label="Columns">
                  <Chip label="INCIDENCIA ID" icon="sort" className="w-[107px]" />
                  <Chip label="INCIDENCIA SUBJECT" icon="sort" className="w-[144px]" />
                  <Chip label="FECHA" icon="sort" className="w-[84px]" />
                </DropRow>
                <DropRow label="Groups" />
                <DropRow label="Filters">
                  <Chip label="SERVICIO DESC" icon="find" className="w-[114px]" />
                  <Chip label="ANYO" icon="find" className="w-[84px]" />
                </DropRow>
              </div>
              <FormatBar />
              <Report />
            </section>
          </div>
        </main>
      </div>
    </div>
  );
}
